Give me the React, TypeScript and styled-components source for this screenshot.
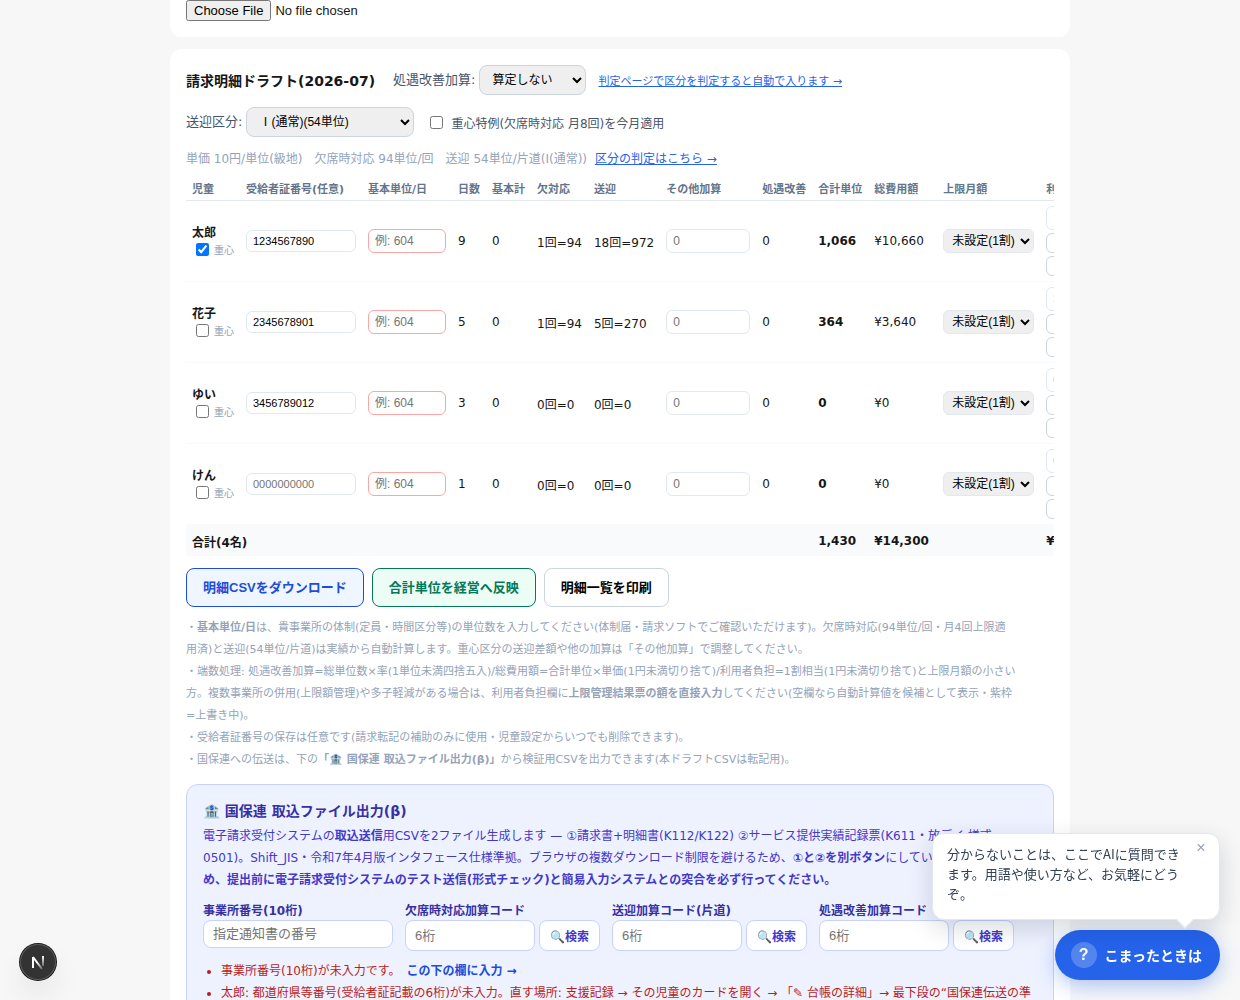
import React from "react";
import styled, { createGlobalStyle } from "styled-components";

const GlobalStyle = createGlobalStyle`
  *, *::before, *::after { box-sizing: border-box; }
  body {
    margin: 0;
    background: #f7f7f7;
    color: #171717;
    font-family: "DejaVu Sans", "Noto Sans CJK JP", sans-serif;
    font-size: 12px;
  }
  input, select, button { font-family: "Liberation Sans", "Noto Sans CJK JP", sans-serif; }
`;

const Page = styled.main`
  max-width: 900px;
  margin: 0 auto;
  display: flex;
  flex-direction: column;
  gap: 12px;
  padding-bottom: 24px;
`;

const Card = styled.section<{ $continued?: boolean }>`
  background: #fff;
  border-radius: ${(p) => (p.$continued ? "0 0 12px 12px" : "12px")};
  padding: ${(p) => (p.$continued ? "0 16px 16px" : "16px")};
`;

const FileInput = styled.input`
  display: block;
  height: 21px;
  font-size: 13px;
`;

const Toolbar = styled.div`
  display: flex;
  flex-wrap: wrap;
  align-items: center;
  gap: 12px;
  margin-bottom: 12px;
`;

const Title = styled.h2`
  margin: 0 6px 0 0;
  font-size: 14px;
  font-weight: 700;
`;

const FieldLabel = styled.label`
  display: flex;
  align-items: baseline;
  gap: 4px;
  font-size: 13px;
  color: #475569;
`;

const ToolSelect = styled.select<{ $width: number }>`
  width: ${(p) => p.$width}px;
  height: 30px;
  padding: 0 8px;
  border: 1px solid #cbd5e1;
  border-radius: 8px;
  background: #efefef;
  color: #000;
  font-size: 12px;
`;

const CheckLabel = styled.label`
  display: flex;
  align-items: center;
  gap: 5px;
  color: #475569;
`;

const TextLink = styled.a`
  color: #2563eb;
  font-size: 11px;
`;

const Rates = styled.p`
  margin: 0 0 7px;
  line-height: 20px;
  color: #94a3b8;
  a { margin-left: 8px; font-size: 12px; }
`;

const TableScroll = styled.div`
  overflow-x: auto;
  scrollbar-width: none;
`;

const Table = styled.table`
  width: 100%;
  border-collapse: collapse;
  white-space: nowrap;
  text-align: left;

  th {
    padding: 6px 6px 2px;
    color: #64748b;
    font-size: 11px;
    line-height: 16px;
  }
  thead tr { border-bottom: 1px solid #e2e8f0; }
  td { padding: 5px 6px; }
  tbody tr { border-bottom: 1px solid #f8fafc; }
  tfoot tr { background: #f8fafc; font-weight: 700; }
  tfoot td { height: 31px; padding: 6px 6px 4px; }
`;

const CostHead = styled.th`
  min-width: 69px;
`;

const ChildName = styled.div`
  font-weight: 700;
  line-height: 16px;
`;

const SevereLabel = styled.label`
  display: flex;
  align-items: center;
  gap: 2px;
  height: 16px;
  color: #94a3b8;
  font-size: 10px;
`;

const CellInput = styled.input<{ $width: number; $tone?: "alert"; $short?: boolean }>`
  display: block;
  width: ${(p) => p.$width}px;
  height: ${(p) => (p.$short ? 22 : 24)}px;
  padding: 0 6px;
  border: 1px solid ${(p) => (p.$tone === "alert" ? "#fca5a5" : "#e2e8f0")};
  border-radius: 6px;
  background: #fff;
  color: #000;
  font-size: ${(p) => (p.$short ? 11 : 12)}px;
`;

const CellSelect = styled.select`
  display: block;
  width: 91px;
  height: 24px;
  padding: 0 0 0 4px;
  border: 1px solid #e2e8f0;
  border-radius: 6px;
  background: #efefef;
  color: #000;
  font-size: 12px;
`;

const BurdenStack = styled.div`
  display: flex;
  flex-direction: column;
  gap: 3px;
`;

const MiniButton = styled.button`
  height: 20px;
  padding: 0 8px;
  border: 1px solid #cbd5e1;
  border-radius: 6px;
  background: #fff;
  color: #475569;
  font-size: 10px;
`;

const Actions = styled.div`
  display: flex;
  flex-wrap: wrap;
  gap: 8px;
  margin-top: 12px;
`;

const tones = {
  blue: { line: "#1d4ed8", fill: "#eff6ff", text: "#1d4ed8" },
  green: { line: "#047857", fill: "#ecfdf5", text: "#047857" },
  plain: { line: "#cbd5e1", fill: "#ffffff", text: "#000000" },
};

const ActionButton = styled.button<{ $tone: keyof typeof tones }>`
  padding: 10px 16px;
  border: 1px solid ${(p) => tones[p.$tone].line};
  border-radius: 8px;
  background: ${(p) => tones[p.$tone].fill};
  color: ${(p) => tones[p.$tone].text};
  font-size: 13px;
  font-weight: 700;
  line-height: 17px;
`;

const Notes = styled.p`
  margin: 10px 0 13px;
  color: #94a3b8;
  font-size: 11px;
  line-height: 22px;
`;

const ExportPanel = styled.section`
  padding: 16px;
  border: 1px solid #c7d2fe;
  border-radius: 12px;
  background: #eef2ff;
`;

const PanelTitle = styled.h3`
  margin: 0 0 4px;
  color: #3730a3;
  font-size: 14px;
  line-height: 20px;
`;

const PanelText = styled.p`
  margin: 0 0 12px;
  color: #4338ca;
  line-height: 22px;
`;

const CodeFields = styled.div`
  display: flex;
  flex-wrap: wrap;
  gap: 12px;
`;

const CodeField = styled.div`
  display: flex;
  flex-direction: column;
  gap: 1px;
  label {
    color: #3730a3;
    font-size: 12px;
    font-weight: 700;
    line-height: 16px;
  }
`;

const SearchRow = styled.div`
  display: flex;
  gap: 4px;
`;

const CodeInput = styled.input<{ $wide?: boolean }>`
  width: ${(p) => (p.$wide ? 190 : 130)}px;
  height: ${(p) => (p.$wide ? 28 : 31)}px;
  padding: 0 9px;
  border: 1px solid #c7d2fe;
  border-radius: 8px;
  background: #fff;
  font-size: 13px;
`;

const SearchButton = styled.button`
  height: 31px;
  padding: 0 10px;
  border: 1px solid #c7d2fe;
  border-radius: 8px;
  background: #fff;
  color: #4338ca;
  font-size: 12px;
  font-weight: 700;
`;

const Problems = styled.ul`
  margin: 9px 0 0;
  padding-left: 18px;
  color: #b91c1c;
  line-height: 22px;
`;

const FixLink = styled.a`
  margin-left: 6px;
  color: #1d4ed8;
  font-weight: 700;
  text-decoration: none;
`;

const HelpDock = styled.aside`
  position: fixed;
  right: 20px;
  bottom: 20px;
  display: flex;
  flex-direction: column;
  align-items: flex-end;
  gap: 10px;
  font-family: "Noto Sans CJK JP", sans-serif;
`;

const Bubble = styled.div`
  position: relative;
  width: 288px;
  padding: 10px 36px 15px 14px;
  border: 1px solid #e2e8f0;
  border-radius: 12px;
  background: #fff;
  color: #334155;
  font-size: 13px;
  line-height: 20px;
  box-shadow: 0 8px 24px rgba(15, 23, 42, 0.16);

  &::after {
    content: "";
    position: absolute;
    right: 28px;
    bottom: -7px;
    width: 12px;
    height: 12px;
    background: #fff;
    border-right: 1px solid #e2e8f0;
    border-bottom: 1px solid #e2e8f0;
    transform: rotate(45deg);
  }
`;

const CloseButton = styled.button`
  position: absolute;
  top: 4px;
  right: 8px;
  width: 20px;
  height: 20px;
  padding: 0;
  border: 0;
  background: none;
  color: #94a3b8;
  font-size: 16px;
  line-height: 20px;
`;

const HelpButton = styled.button`
  display: flex;
  align-items: center;
  gap: 8px;
  height: 50px;
  padding: 0 18px 0 16px;
  border: 0;
  border-radius: 25px;
  background: #2563eb;
  color: #fff;
  font-family: "Noto Sans CJK JP", sans-serif;
  font-size: 14px;
  font-weight: 700;
  box-shadow: 0 6px 20px rgba(37, 99, 235, 0.35);
`;

const QuestionMark = styled.span`
  display: grid;
  place-items: center;
  width: 26px;
  height: 26px;
  border-radius: 50%;
  background: rgba(255, 255, 255, 0.22);
  font-family: "Liberation Sans", sans-serif;
  font-size: 16px;
  line-height: 26px;
`;

const DevButton = styled.button`
  position: fixed;
  left: 20px;
  bottom: 20px;
  width: 36px;
  height: 36px;
  padding: 0;
  border: 0;
  border-radius: 50%;
  background: #333;
  box-shadow: 0 0 0 1px #171717, inset 0 0 0 1px #5a5a5a, 0 16px 32px -8px rgba(0, 0, 0, 0.24);
  svg { display: block; }
`;

type Child = {
  name: string;
  severe: boolean;
  certificate: string;
  days: number;
  absence: string;
  transport: string;
  units: string;
  cost: string;
  burden: string;
};

const children: Child[] = [
  { name: "太郎", severe: true, certificate: "1234567890", days: 9, absence: "1回=94", transport: "18回=972", units: "1,066", cost: "¥10,660", burden: "1066" },
  { name: "花子", severe: false, certificate: "2345678901", days: 5, absence: "1回=94", transport: "5回=270", units: "364", cost: "¥3,640", burden: "364" },
  { name: "ゆい", severe: false, certificate: "3456789012", days: 3, absence: "0回=0", transport: "0回=0", units: "0", cost: "¥0", burden: "0" },
  { name: "けん", severe: false, certificate: "", days: 1, absence: "0回=0", transport: "0回=0", units: "0", cost: "¥0", burden: "0" },
];

const ChildRow = ({ child }: { child: Child }) => (
  <tr>
    <td>
      <ChildName>{child.name}</ChildName>
      <SevereLabel>
        <input type="checkbox" defaultChecked={child.severe} />
        重心
      </SevereLabel>
    </td>
    <td>
      <CellInput $width={110} $short aria-label="受給者証番号" placeholder="0000000000" defaultValue={child.certificate} />
    </td>
    <td>
      <CellInput $width={78} $tone="alert" aria-label="基本単位/日" placeholder="例: 604" />
    </td>
    <td>{child.days}</td>
    <td>0</td>
    <td>{child.absence}</td>
    <td>{child.transport}</td>
    <td>
      <CellInput $width={84} aria-label="その他加算" placeholder="0" />
    </td>
    <td>0</td>
    <td><strong>{child.units}</strong></td>
    <td>{child.cost}</td>
    <td>
      <CellSelect aria-label="上限月額">
        <option>未設定(1割)</option>
      </CellSelect>
    </td>
    <td>
      <BurdenStack>
        <CellInput $width={84} aria-label="利用者負担" placeholder={child.burden} />
        <MiniButton type="button">請求書</MiniButton>
        <MiniButton type="button">領収書</MiniButton>
      </BurdenStack>
    </td>
  </tr>
);

const SearchField = ({ id, label }: { id: string; label: string }) => (
  <CodeField>
    <label htmlFor={id}>{label}</label>
    <SearchRow>
      <CodeInput id={id} placeholder="6桁" />
      <SearchButton type="button">🔍検索</SearchButton>
    </SearchRow>
  </CodeField>
);

export default function App() {
  return (
    <>
      <GlobalStyle />
      <Page lang="ja">
        <Card $continued>
          <FileInput type="file" aria-label="ファイル" />
        </Card>

        <Card>
          <Toolbar>
            <Title>請求明細ドラフト(2026-07)</Title>
            <FieldLabel>
              処遇改善加算:
              <ToolSelect $width={107}>
                <option>算定しない</option>
              </ToolSelect>
            </FieldLabel>
            <TextLink href="#judge">判定ページで区分を判定すると自動で入ります →</TextLink>
          </Toolbar>
          <Toolbar>
            <FieldLabel>
              送迎区分:
              <ToolSelect $width={168}>
                <option>Ⅰ(通常)(54単位)</option>
              </ToolSelect>
            </FieldLabel>
            <CheckLabel>
              <input type="checkbox" />
              重心特例(欠席時対応 月8回)を今月適用
            </CheckLabel>
          </Toolbar>
          <Rates>
            単価 10円/単位(級地)　欠席時対応 94単位/回　送迎 54単位/片道(Ⅰ(通常))
            <TextLink href="#judge">区分の判定はこちら →</TextLink>
          </Rates>

          <TableScroll>
            <Table>
              <thead>
                <tr>
                  <th>児童</th>
                  <th>受給者証番号(任意)</th>
                  <th>基本単位/日</th>
                  <th>日数</th>
                  <th>基本計</th>
                  <th>欠対応</th>
                  <th>送迎</th>
                  <th>その他加算</th>
                  <th>処遇改善</th>
                  <th>合計単位</th>
                  <CostHead>総費用額</CostHead>
                  <th>上限月額</th>
                  <th>利用者負担</th>
                </tr>
              </thead>
              <tbody>
                {children.map((child) => (
                  <ChildRow key={child.name} child={child} />
                ))}
              </tbody>
              <tfoot>
                <tr>
                  <td colSpan={9}>合計(4名)</td>
                  <td>1,430</td>
                  <td>¥14,300</td>
                  <td />
                  <td>¥1,430</td>
                </tr>
              </tfoot>
            </Table>
          </TableScroll>

          <Actions>
            <ActionButton type="button" $tone="blue">明細CSVをダウンロード</ActionButton>
            <ActionButton type="button" $tone="green">合計単位を経営へ反映</ActionButton>
            <ActionButton type="button" $tone="plain">明細一覧を印刷</ActionButton>
          </Actions>

          <Notes>
            ・<strong>基本単位/日</strong>は、貴事業所の体制(定員・時間区分等)の単位数を入力してください(体制届・請求ソフトでご確認いただけます)。欠席時対応(94単位/回・月4回上限適
            <br />
            用済)と送迎(54単位/片道)は実績から自動計算します。重心区分の送迎差額や他の加算は「その他加算」で調整してください。
            <br />
            ・端数処理: 処遇改善加算=総単位数×率(1単位未満四捨五入)/総費用額=合計単位×単価(1円未満切り捨て)/利用者負担=1割相当(1円未満切り捨て)と上限月額の小さい
            <br />
            方。複数事業所の併用(上限額管理)や多子軽減がある場合は、利用者負担欄に<strong>上限管理結果票の額を直接入力</strong>してください(空欄なら自動計算値を候補として表示・紫枠
            <br />
            =上書き中)。
            <br />
            ・受給者証番号の保存は任意です(請求転記の補助のみに使用・児童設定からいつでも削除できます)。
            <br />
            ・国保連への伝送は、下の<strong>「🏦 国保連 取込ファイル出力(β)」</strong>から検証用CSVを出力できます(本ドラフトCSVは転記用)。
          </Notes>

          <ExportPanel>
            <PanelTitle>🏦 国保連 取込ファイル出力(β)</PanelTitle>
            <PanelText>
              電子請求受付システムの<strong>取込送信</strong>用CSVを2ファイル生成します — ①請求書+明細書(K112/K122) ②サービス提供実績記録票(K611・放デイ 様式0501)。Shift_JIS・令和7年4月版インタフェース仕様準拠。ブラウザの複数ダウンロード制限を避けるため、<strong>①と②を別ボタン</strong>にしています。<strong>検証用のため、提出前に電子請求受付システムのテスト送信(形式チェック)と簡易入力システムとの突合を必ず行ってください。</strong>
            </PanelText>
            <CodeFields>
              <CodeField>
                <label htmlFor="office">事業所番号(10桁)</label>
                <CodeInput $wide id="office" placeholder="指定通知書の番号" />
              </CodeField>
              <SearchField id="absence" label="欠席時対応加算コード" />
              <SearchField id="transport" label="送迎加算コード(片道)" />
              <SearchField id="treatment" label="処遇改善加算コード" />
            </CodeFields>
            <Problems>
              <li>
                事業所番号(10桁)が未入力です。
                <FixLink href="#office">この下の欄に入力 →</FixLink>
              </li>
              <li>太郎: 都道府県等番号(受給者証記載の6桁)が未入力。直す場所: 支援記録 → その児童のカードを開く → 「✎ 台帳の詳細」→ 最下段の“国保連伝送の準備”</li>
            </Problems>
          </ExportPanel>
        </Card>
      </Page>

      <HelpDock lang="ja">
        <Bubble>
          分からないことは、ここでAIに質問できます。用語や使い方など、お気軽にどうぞ。
          <CloseButton type="button" aria-label="閉じる">×</CloseButton>
        </Bubble>
        <HelpButton type="button">
          <QuestionMark>?</QuestionMark>
          こまったときは
        </HelpButton>
      </HelpDock>

      <DevButton type="button" aria-label="Next.js">
        <svg width="36" height="36" viewBox="0 0 36 36" fill="none">
          <defs>
            <linearGradient id="stem" x1="0" y1="12" x2="0" y2="24" gradientUnits="userSpaceOnUse">
              <stop stopColor="#fff" />
              <stop offset="1" stopColor="#fff" stopOpacity="0.1" />
            </linearGradient>
            <linearGradient id="slash" x1="18" y1="18" x2="23" y2="25" gradientUnits="userSpaceOnUse">
              <stop stopColor="#fff" />
              <stop offset="1" stopColor="#fff" stopOpacity="0.2" />
            </linearGradient>
          </defs>
          <path d="M13 24V13" stroke="#fff" strokeWidth="2" />
          <path d="M13 13L22 25" stroke="url(#slash)" strokeWidth="2" />
          <path d="M23 12V22" stroke="url(#stem)" strokeWidth="2" />
        </svg>
      </DevButton>
    </>
  );
}
